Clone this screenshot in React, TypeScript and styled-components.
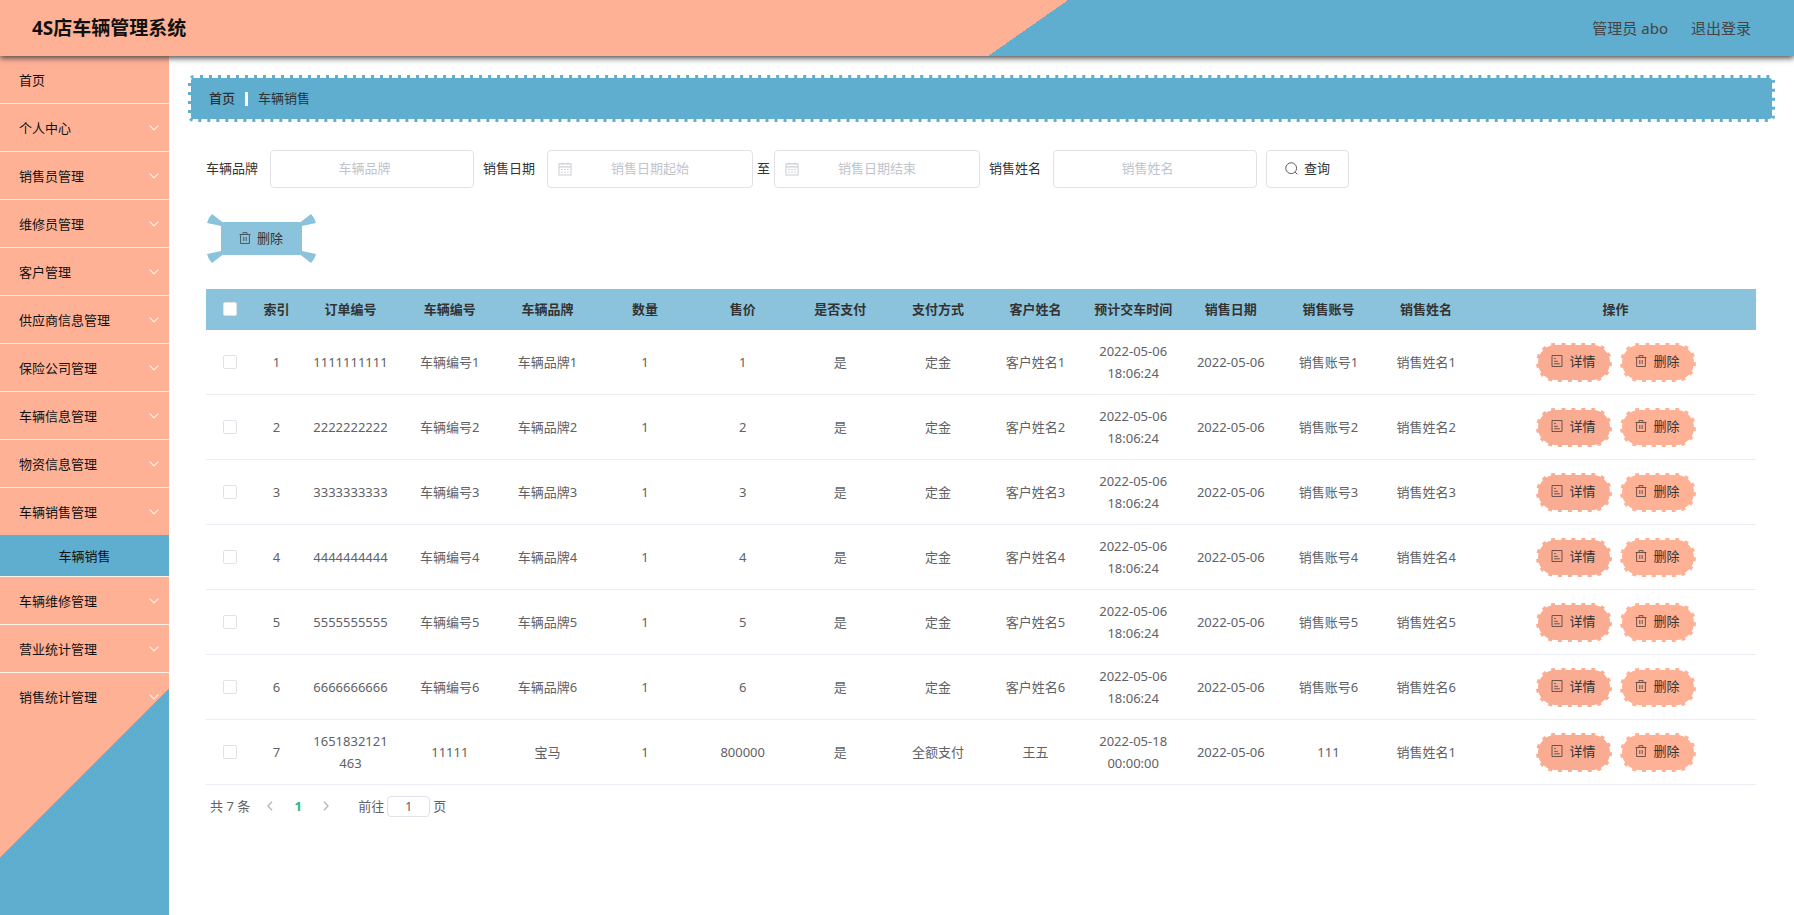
import React from "react";
import styled, { createGlobalStyle, css } from "styled-components";

const PEACH = "#ffb196";
const BLUE = "#5fadcf";
const SKY = "#8bc3dc";
const LINE = "#e0e2e7";

const GlobalStyle = createGlobalStyle`
  *, *::before, *::after { box-sizing: border-box; }
  body {
    margin: 0;
    background: #fff;
    color: #333;
    font-family: "Noto Sans", "Noto Sans CJK SC", sans-serif;
    font-size: 13px;
    line-height: 22px;
  }
  button, input { font: inherit; color: inherit; }
  a { color: inherit; text-decoration: none; }
`;

const Page = styled.div`
  display: flex;
  flex-direction: column;
  min-height: 100vh;
`;

const Header = styled.header`
  display: flex;
  align-items: center;
  justify-content: space-between;
  height: 56px;
  padding: 0 43px 0 32px;
  position: relative;
  z-index: 1;
  background: linear-gradient(145deg, ${PEACH} 57%, ${BLUE} 57%);
  box-shadow: 0 2px 6px #444;
`;

const Title = styled.h1`
  margin: 0;
  font-size: 19px;
  line-height: 28px;
  font-weight: 700;
  color: #111;
`;

const UserNav = styled.nav`
  display: flex;
  gap: 23px;
  font-size: 15px;
  color: #444;
`;

const Body = styled.div`
  display: flex;
  flex: 1;
`;

const Sidebar = styled.nav`
  flex: none;
  width: 169px;
  background: linear-gradient(135deg, ${PEACH} 78%, ${BLUE} 78%);
`;

const Menu = styled.ul`
  margin: 0;
  padding: 0;
  list-style: none;
`;

const MenuItem = styled.li`
  border-bottom: 1px solid #fff0ea;
  &:last-child { border-bottom: 0; }
`;

const MenuLink = styled.a`
  display: flex;
  align-items: center;
  justify-content: space-between;
  height: 47px;
  padding: 0 10px 0 19px;
  color: #111;
`;

const SubLink = styled.a`
  display: flex;
  align-items: center;
  justify-content: center;
  height: 41px;
  background: ${BLUE};
  color: #111;
`;

const Main = styled.main`
  flex: 1;
  min-width: 0;
  padding: 19px;
`;

const Crumbs = styled.nav`
  display: flex;
  align-items: center;
  gap: 10px;
  height: 47px;
  padding: 0 18px 2px;
  border: 3px dashed #fff;
  border-radius: 6px;
  background: ${BLUE};
  color: #303133;
`;

const Home = styled.a`
  font-weight: 500;
`;

const Bar = styled.span`
  width: 3px;
  height: 14px;
  margin-top: 2px;
  background: #fff;
`;

const Content = styled.section`
  padding: 28px 19px 0 18px;
`;

const Filters = styled.form`
  display: flex;
  align-items: center;
  gap: 9px;
`;

const Field = styled.div`
  display: flex;
  align-items: center;
  gap: 12px;
`;

const Caption = styled.label`
  padding-bottom: 2px;
`;

const Range = styled.div`
  display: flex;
  align-items: center;
  gap: 4px;
`;

const Box = styled.label<{ $date?: boolean }>`
  display: flex;
  align-items: center;
  width: ${(p) => (p.$date ? 206 : 204)}px;
  height: 38px;
  padding: ${(p) => (p.$date ? "0 10px" : "0 29px 0 14px")};
  border: 1px solid ${LINE};
  border-radius: 4px;
  color: #c0c4cc;
`;

const BoxInput = styled.input`
  flex: 1;
  min-width: 0;
  padding: 0 0 2px;
  border: 0;
  outline: 0;
  background: transparent;
  color: #606266;
  text-align: center;
  &::placeholder { color: #c0c4cc; opacity: 1; }
`;

const IconSpace = styled.span`
  width: 14px;
`;

const buttonBase = css`
  display: inline-flex;
  align-items: center;
  justify-content: center;
  gap: 6px;
  padding: 0 0 2px;
  color: #333;
  cursor: pointer;
`;

const SearchButton = styled.button`
  ${buttonBase}
  width: 83px;
  height: 38px;
  border: 1px solid ${LINE};
  border-radius: 4px;
  background: #fff;
`;

const DeleteButton = styled.button`
  ${buttonBase}
  position: relative;
  width: 110px;
  height: 49px;
  margin: 26px 0;
  border: 0;
  background: transparent;
`;

const Ribbon = styled.svg`
  position: absolute;
  inset: 0;
  z-index: -1;
`;

const RowButton = styled.button<{ $tone?: string }>`
  ${buttonBase}
  width: 76px;
  height: 39px;
  border: 2px dashed #fff;
  border-radius: 20px;
  background: ${(p) => p.$tone ?? PEACH};
`;

const Table = styled.table`
  width: 100%;
  table-layout: fixed;
  border-collapse: separate;
  border-spacing: 0;
  text-align: center;
  color: #606266;
`;

const Col = styled.col<{ $w?: number }>`
  width: ${(p) => (p.$w ? p.$w + "px" : "auto")};
`;

const Th = styled.th`
  height: 41px;
  padding: 0 0 1px;
  background: ${SKY};
  color: #333;
  font-weight: 700;
`;

const Td = styled.td`
  height: 65px;
  padding: 0 10px;
  border-bottom: 1px solid #ebeef5;
  word-break: break-all;
`;

const CheckTd = styled(Td)`
  padding: 0;
`;

const Check = styled.input`
  appearance: none;
  display: block;
  width: 14px;
  height: 14px;
  margin: 0 auto;
  border: 1px solid ${LINE};
  border-radius: 2px;
  background: #fff;
`;

const Actions = styled.div`
  display: flex;
  justify-content: center;
  gap: 8px;
`;

const Pager = styled.nav`
  display: flex;
  align-items: center;
  height: 42px;
  padding-left: 4px;
  color: #606266;
`;

const PageButton = styled.button<{ $active?: boolean }>`
  ${buttonBase}
  width: 28px;
  height: 28px;
  padding: 0;
  border: 0;
  background: transparent;
  color: ${(p) => (p.$active ? "#1abc84" : "#b4b8c0")};
  font-weight: 700;
`;

const Total = styled.span`
  margin-right: 6px;
`;

const Jump = styled.label`
  display: flex;
  align-items: center;
  gap: 3px;
  margin-left: 18px;
`;

const JumpInput = styled.input`
  width: 43px;
  height: 21px;
  padding: 0;
  border: 1px solid ${LINE};
  border-radius: 4px;
  text-align: center;
`;

const Glyph = styled.svg`
  flex: none;
  opacity: 0.8;
`;

const Icon = ({ children, size = 12 }: { children: React.ReactNode; size?: number }) => (
  <Glyph width={size} height={size} viewBox="0 0 12 12" fill="none" stroke="currentColor" strokeWidth="0.9" aria-hidden="true">
    {children}
  </Glyph>
);

const Trash = () => (
  <Icon>
    <path d="M.5 2.500h11M4 2.500V.6h4v1.900M1.600 2.500v9h8.800v-9M4.800 5v4M7.200 5v4" />
  </Icon>
);

const Doc = () => (
  <Icon>
    <path d="M1 .5h10v11H1zM3.200 3.500h1.600M3.200 6.300h3.600M3.200 8.800h5.600" />
  </Icon>
);

const Magnifier = () => (
  <Icon size={13}>
    <circle cx="5.700" cy="5.700" r="5" />
    <path d="M9.300 9.300l2 2" />
  </Icon>
);

const Calendar = () => (
  <Icon size={14}>
    <path d="M.8 1.600h10.400v9.600H.8zM.8 4.200h10.400M3.400.4v2M8.600.4v2M2.800 6.400h1.400M5.300 6.400h1.400M7.800 6.400h1.400M2.800 8.800h1.400M5.300 8.800h1.400M7.800 8.800h1.400" />
  </Icon>
);

const Chevron = () => (
  <svg width="10" height="6" viewBox="0 0 10 6" fill="none" stroke="#fff0ea" strokeWidth="1.200" aria-hidden="true">
    <path d="M.7.700L5 5l4.300-4.300" />
  </svg>
);

const Arrow = ({ d }: { d: string }) => (
  <svg width="6" height="10" viewBox="0 0 6 10" fill="none" stroke="currentColor" strokeWidth="1.400" aria-hidden="true">
    <path d={d} />
  </svg>
);

const menu = [
  "首页", "个人中心", "销售员管理", "维修员管理", "客户管理", "供应商信息管理", "保险公司管理",
  "车辆信息管理", "物资信息管理", "车辆销售管理", "车辆维修管理", "营业统计管理", "销售统计管理",
];

const headings = [
  "索引", "订单编号", "车辆编号", "车辆品牌", "数量", "售价", "是否支付", "支付方式",
  "客户姓名", "预计交车时间", "销售日期", "销售账号", "销售姓名", "操作",
];

const rows: string[][] = [
  ...[1, 2, 3, 4, 5, 6].map((n) => [
    `${n}`, `${n}`.repeat(10), `车辆编号${n}`, `车辆品牌${n}`, "1", `${n}`, "是", "定金",
    `客户姓名${n}`, "2022-05-06 18:06:24", "2022-05-06", `销售账号${n}`, `销售姓名${n}`,
  ]),
  ["7", "1651832121463", "11111", "宝马", "1", "800000", "是", "全额支付", "王五",
    "2022-05-18 00:00:00", "2022-05-06", "111", "销售姓名1"],
];

export default function App() {
  return (
    <Page>
      <GlobalStyle />
      <Header>
        <Title>4S店车辆管理系统</Title>
        <UserNav>
          <span>管理员 abo</span>
          <a href="#logout">退出登录</a>
        </UserNav>
      </Header>
      <Body>
        <Sidebar>
          <Menu>
            {menu.map((name, i) => (
              <MenuItem key={name}>
                <MenuLink href={`#menu-${i}`}>
                  {name}
                  {i > 0 && <Chevron />}
                </MenuLink>
                {name === "车辆销售管理" && <SubLink href="#sales">车辆销售</SubLink>}
              </MenuItem>
            ))}
          </Menu>
        </Sidebar>
        <Main>
          <Crumbs>
            <Home href="#home">首页</Home>
            <Bar />
            <span>车辆销售</span>
          </Crumbs>
          <Content>
            <Filters>
              <Field>
                <Caption htmlFor="brand">车辆品牌</Caption>
                <Box>
                  <BoxInput id="brand" placeholder="车辆品牌" />
                </Box>
              </Field>
              <Field>
                <Caption htmlFor="from">销售日期</Caption>
                <Range>
                  <Box $date>
                    <Calendar />
                    <BoxInput id="from" placeholder="销售日期起始" />
                    <IconSpace />
                  </Box>
                  <Caption htmlFor="to">至</Caption>
                  <Box $date>
                    <Calendar />
                    <BoxInput id="to" placeholder="销售日期结束" />
                    <IconSpace />
                  </Box>
                </Range>
              </Field>
              <Field>
                <Caption htmlFor="seller">销售姓名</Caption>
                <Box>
                  <BoxInput id="seller" placeholder="销售姓名" />
                </Box>
              </Field>
              <SearchButton type="button">
                <Magnifier />
                查询
              </SearchButton>
            </Filters>
            <DeleteButton type="button">
              <Ribbon width="110" height="49" viewBox="0 0 110 49" fill={SKY} aria-hidden="true">
                <rect x="15" y="8" width="81" height="33" rx="3" />
                <path d="M1 9Q2 4 6 0L17 8.500L15 12zM110 9Q109 4 105 0L94 8.500L96 12zM1 40Q2 45 6 49L17 40.500L15 37zM110 40Q109 45 105 49L94 40.500L96 37z" />
              </Ribbon>
              <Trash />
              删除
            </DeleteButton>
            <Table>
              <colgroup>
                <Col $w={47} />
                <Col $w={47} />
                <Col $w={101} />
                {headings.slice(2, 13).map((h) => <Col key={h} />)}
                <Col $w={281} />
              </colgroup>
              <thead>
                <tr>
                  <Th><Check type="checkbox" aria-label="全选" /></Th>
                  {headings.map((h) => <Th key={h}>{h}</Th>)}
                </tr>
              </thead>
              <tbody>
                {rows.map((row) => (
                  <tr key={row[0]}>
                    <CheckTd><Check type="checkbox" aria-label={`选择 ${row[0]}`} /></CheckTd>
                    {row.map((cell, i) => <Td key={i}>{cell}</Td>)}
                    <Td>
                      <Actions>
                        <RowButton type="button" $tone="#f9ac92"><Doc />详情</RowButton>
                        <RowButton type="button"><Trash />删除</RowButton>
                      </Actions>
                    </Td>
                  </tr>
                ))}
              </tbody>
            </Table>
            <Pager>
              <Total>共 7 条</Total>
              <PageButton type="button" aria-label="上一页"><Arrow d="M5 .8L1 5l4 4.200" /></PageButton>
              <PageButton type="button" $active>1</PageButton>
              <PageButton type="button" aria-label="下一页"><Arrow d="M1 .8L5 5 1 9.200" /></PageButton>
              <Jump>
                前往
                <JumpInput defaultValue="1" />
                页
              </Jump>
            </Pager>
          </Content>
        </Main>
      </Body>
    </Page>
  );
}
